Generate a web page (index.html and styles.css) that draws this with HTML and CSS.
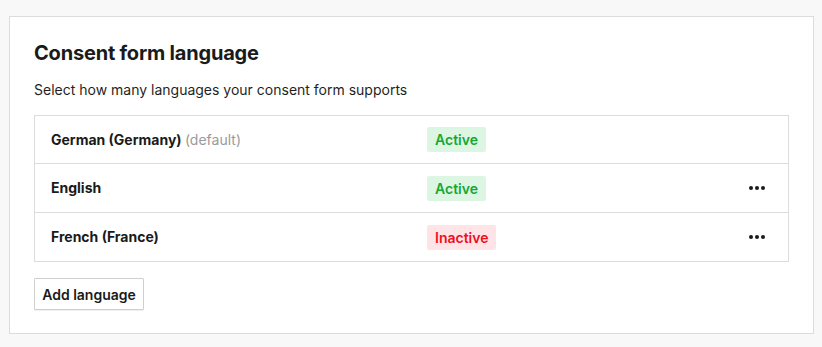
FILE: index.html
```html
<!DOCTYPE html>
<html lang="en">
<head>
<meta charset="utf-8">
<title>Consent form language</title>
<link rel="stylesheet" href="styles.css">
</head>
<body>
<section class="card">
  <h2 class="card-title">Consent form language</h2>
  <p class="card-desc">Select how many languages your consent form supports</p>
  <div class="lang-table">
    <div class="lang-row">
      <div class="lang-name">German (Germany) <span class="lang-default">(default)</span></div>
      <div class="lang-status"><span class="badge badge-active">Active</span></div>
      <div class="lang-actions"></div>
    </div>
    <div class="lang-row">
      <div class="lang-name">English</div>
      <div class="lang-status"><span class="badge badge-active">Active</span></div>
      <div class="lang-actions"><button class="more-btn" aria-label="More actions"><span class="dot"></span><span class="dot"></span><span class="dot"></span></button></div>
    </div>
    <div class="lang-row">
      <div class="lang-name">French (France)</div>
      <div class="lang-status"><span class="badge badge-inactive">Inactive</span></div>
      <div class="lang-actions"><button class="more-btn" aria-label="More actions"><span class="dot"></span><span class="dot"></span><span class="dot"></span></button></div>
    </div>
  </div>
  <button class="add-btn">Add language</button>
</section>
</body>
</html>
```
FILE: styles.css
```css
* { box-sizing: border-box; }
html, body { height: 100%; }
body {
  margin: 0;
  padding: 16px 8px 0 9px;
  background: #f8f8f8;
  font-family: Inter, "Noto Sans", sans-serif;
  color: #1c1c1c;
}
.card {
  background: #fff;
  border: 1px solid #dcdcdc;
  padding: 24px 24px 23px;
  display: flex;
  flex-direction: column;
  align-items: flex-start;
}
.card-title {
  margin: 0 0 15px;
  font-size: 20px;
  line-height: 24px;
  font-weight: 700;
  letter-spacing: -0.2px;
  color: #1a1a1a;
}
.card-desc {
  margin: 0 0 15px;
  font-size: 14px;
  line-height: 20px;
  color: #1f1f1f;
}
.lang-table {
  align-self: stretch;
  border: 1px solid #dcdcdc;
}
.lang-row {
  display: grid;
  grid-template-columns: 376px 1fr auto;
  align-items: center;
  height: 49px;
  padding: 0 23px 0 16px;
  border-bottom: 1px solid #dcdcdc;
}
.lang-row:first-child { height: 48px; }
.lang-row:last-child { border-bottom: 0; height: 48px; }
.lang-name {
  font-size: 14px;
  line-height: 20px;
  font-weight: 700;
  color: #1a1a1a;
}
.lang-default {
  font-weight: 400;
  color: #9a9a9a;
}
.lang-status { display: flex; }
.badge {
  display: inline-block;
  font-size: 14px;
  line-height: 25px;
  height: 25px;
  padding: 0 8px;
  border-radius: 2px;
  font-weight: 600;
}
.badge-active { background: #ddf6e4; color: #15a832; }
.badge-inactive { background: #fee4e6; color: #ee0f1e; }
.lang-actions {
  display: flex;
  justify-content: flex-end;
}
.more-btn {
  border: 0;
  background: transparent;
  padding: 0;
  display: flex;
  gap: 2px;
  align-items: center;
  height: 16px;
  cursor: pointer;
}
.dot {
  width: 4px;
  height: 4px;
  border-radius: 50%;
  background: #1a1a1a;
}
.add-btn {
  margin-top: 16px;
  height: 32px;
  width: 110px;
  padding: 0;
  background: #fff;
  border: 1px solid #cfcfcf;
  box-shadow: 0 1px 0 rgba(0,0,0,0.06);
  border-radius: 1px;
  font-family: Inter, "Noto Sans", sans-serif;
  font-size: 14px;
  font-weight: 600;
  color: #1a1a1a;
}
```
